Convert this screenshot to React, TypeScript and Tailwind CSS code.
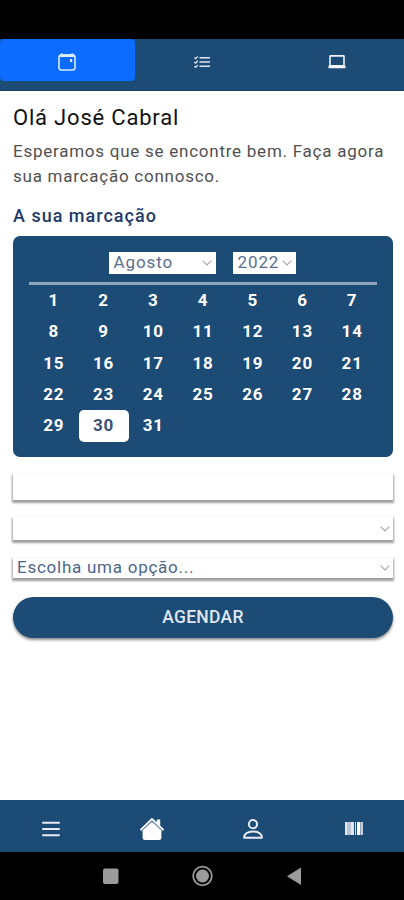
import { ReactNode } from 'react';
import clsx from 'clsx';

const DAYS = Array.from({ length: 31 }, (_, i) => i + 1);
const SELECTED_DAY = 30;

function CalendarIcon() {
  return (
    <svg width="18" height="18" viewBox="0 0 18 18" fill="none" stroke="#dceaff">
      <rect x="1" y="2" width="16" height="15" rx="2.5" strokeWidth="1.6" />
      <path d="M1.8 2.6h14.4" strokeWidth="2.8" />
      <path d="M4 0.2v2M14 0.2v2" strokeWidth="1.4" />
      <rect x="12" y="6" width="2.2" height="3" fill="#dceaff" stroke="none" />
    </svg>
  );
}

function ListIcon() {
  return (
    <svg width="16" height="12" viewBox="0 0 16 12" fill="none" stroke="#dfe6f2" strokeWidth="1.5">
      <path d="M5.5 1.7H16M5.5 6H16M5.5 10.3H16" />
      <path d="M0.4 1.6l1.2 1.1L3.8 0.5M0.4 5.9l1.2 1.1L3.8 4.8M0.4 10.2l1.2 1.1L3.8 9.1" strokeWidth="1.3" />
    </svg>
  );
}

function LaptopIcon() {
  return (
    <svg width="18" height="14" viewBox="0 0 18 14" fill="none">
      <rect x="2" y="0.9" width="14" height="10" rx="0.5" stroke="#f0f4fb" strokeWidth="1.6" />
      <path d="M0.4 10.8h17.2v1.6a0.8 0.8 0 0 1-0.8 0.8H1.2a0.8 0.8 0 0 1-0.8-0.8z" fill="#f0f4fb" />
    </svg>
  );
}

function MenuIcon() {
  return (
    <svg width="18" height="16" viewBox="0 0 18 16" stroke="#e6ecf6" strokeWidth="2" strokeLinecap="round">
      <path d="M1 1.8h16M1 8h16M1 14.2h16" />
    </svg>
  );
}

function HomeIcon() {
  return (
    <svg width="24" height="24" viewBox="0 0 24 24" fill="#fff">
      <path d="M16.8 2.6h3.4v7l-3.4-3z" />
      <path d="M12 5l9.4 7.8v7.9a2.3 2.3 0 0 1-2.3 2.3H4.9a2.3 2.3 0 0 1-2.3-2.3v-7.9z" />
      <path d="M0.9 13.6L12 3.2l11.1 10.4" fill="none" stroke="#7d95b5" strokeWidth="2.2" />
      <path d="M0.9 12.5L12 1.8l11.1 10.7" fill="none" stroke="#fff" strokeWidth="1.7" strokeLinecap="round" strokeLinejoin="round" />
    </svg>
  );
}

function PersonIcon() {
  return (
    <svg width="20" height="20" viewBox="0 0 20 20" fill="none" stroke="#e6ecf6" strokeWidth="2">
      <circle cx="10" cy="5.2" r="4.1" />
      <path d="M1.2 18.7c-.3-3.7 3.2-6.2 8.8-6.2s9.1 2.5 8.8 6.2z" strokeLinejoin="round" />
    </svg>
  );
}

function BarcodeIcon() {
  return (
    <svg width="18" height="14" viewBox="0 0 18 14">
      <rect x="0" width="2" height="13" fill="#dfe5ef" />
      <rect x="2" width="4" height="13" fill="#b9c3d2" />
      <rect x="6" width="3" height="13" fill="#e2e8f0" />
      <rect x="10" width="1" height="13" fill="#d5dde9" />
      <rect x="12" width="3" height="13" fill="#fff" />
      <rect x="15" width="1" height="13" fill="#8fa3bd" />
      <rect x="16" width="2" height="13" fill="#c5cedb" />
    </svg>
  );
}

function Chevron() {
  return (
    <svg width="10" height="6" viewBox="0 0 10 6" fill="none" stroke="#a3a7ad" strokeWidth="1.1" className="shrink-0">
      <path d="M0.6 0.6L5 5l4.4-4.4" />
    </svg>
  );
}

function Tab({ active, children }: { active?: boolean; children: ReactNode }) {
  return (
    <button
      className={clsx(
        'flex h-[42px] flex-1 items-center justify-center rounded-[4px] pt-[3px]',
        active && 'bg-[#0b6cff]'
      )}
    >
      {children}
    </button>
  );
}

function Field({ className, children }: { className?: string; children?: ReactNode }) {
  return (
    <div
      className={clsx(
        'flex items-center bg-white pr-[3px] pl-1 shadow-[0_2px_2px_1px_rgba(0,0,0,0.38)]',
        className
      )}
    >
      {children}
    </div>
  );
}

export default function App() {
  return (
    <div className="flex h-[900px] w-[404px] flex-col bg-white font-['Roboto',sans-serif]">
      <div className="h-[39px] bg-black" />

      <nav className="flex h-[52px] border-b border-[#164070] bg-[#1c4b75]">
        <Tab active><CalendarIcon /></Tab>
        <Tab><ListIcon /></Tab>
        <Tab><LaptopIcon /></Tab>
      </nav>

      <main className="flex flex-1 flex-col pr-[11px] pl-[13px]">
        <h1 className="mt-[13px] text-[22px] leading-[28px] tracking-[0.8px] text-[#111]">Olá José Cabral</h1>
        <p className="mt-[7px] text-[17px] leading-[25px] tracking-[0.75px] whitespace-nowrap text-[#505050]">
          Esperamos que se encontre bem. Faça agora
          <br />
          sua marcação connosco.
        </p>
        <h2 className="mt-[15px] text-[18px] leading-6 font-medium tracking-[1px] text-[#1f3a6b]">A sua marcação</h2>

        {/* Calendar */}
        <section className="mt-2 h-[221px] rounded-[7px] bg-[#1c4b75] px-4 pt-4">
          <div className="flex justify-center gap-[17px] pr-[2px] text-[17px] tracking-[0.9px] text-[#5a6f90]">
            <div className="flex h-[22px] w-[107px] items-center justify-between bg-white pr-1 pl-[5px]">
              Agosto
              <Chevron />
            </div>
            <div className="flex h-[22px] w-[63px] items-center justify-between bg-white pr-1 pl-[5px]">
              2022
              <Chevron />
            </div>
          </div>
          <div className="mt-2 h-[3px] bg-[#8fa2bd]" />
          <div className="grid grid-cols-7">
            {DAYS.map((day) => (
              <div key={day} className="flex h-[31.3px] items-center justify-center">
                <span
                  className={clsx(
                    'flex h-8 w-[50px] shrink-0 items-center justify-center rounded-[5px] text-[17px] font-bold tracking-[0.8px]',
                    day === SELECTED_DAY ? 'bg-white text-[#3b5375]' : 'text-white'
                  )}
                >
                  {day}
                </span>
              </div>
            ))}
          </div>
        </section>

        <Field className="mt-[17px] h-[26px]" />
        <Field className="mt-[17px] h-[23px] justify-end">
          <Chevron />
        </Field>
        <Field className="mt-[18px] h-[20px] justify-between text-[17px] tracking-[0.75px] text-[#4c668c]">
          Escolha uma opção...
          <Chevron />
        </Field>

        <button className="mt-[19px] h-[41px] rounded-full bg-[#1c4b75] text-[17.5px] font-medium tracking-[0.3px] text-[#dfe7f3] shadow-[0_2px_3px_rgba(0,0,0,0.45)]">
          AGENDAR
        </button>
      </main>

      <nav className="grid h-[52px] grid-cols-4 place-items-center bg-[#1c4b75] pt-[5px]">
        <MenuIcon />
        <HomeIcon />
        <PersonIcon />
        <BarcodeIcon />
      </nav>

      {/* System navigation */}
      <div className="flex h-12 items-center justify-center bg-black">
        <svg width="204" height="24" viewBox="0 0 204 24" fill="#9b9b9b">
          <rect x="3" y="4.5" width="15.5" height="15.5" rx="2" />
          <circle cx="102.5" cy="12" r="9.3" fill="none" stroke="#9b9b9b" strokeWidth="1.8" />
          <circle cx="102.5" cy="12" r="6.5" />
          <path d="M187 12.3L201 3.5v17.6z" />
        </svg>
      </div>
    </div>
  );
}
